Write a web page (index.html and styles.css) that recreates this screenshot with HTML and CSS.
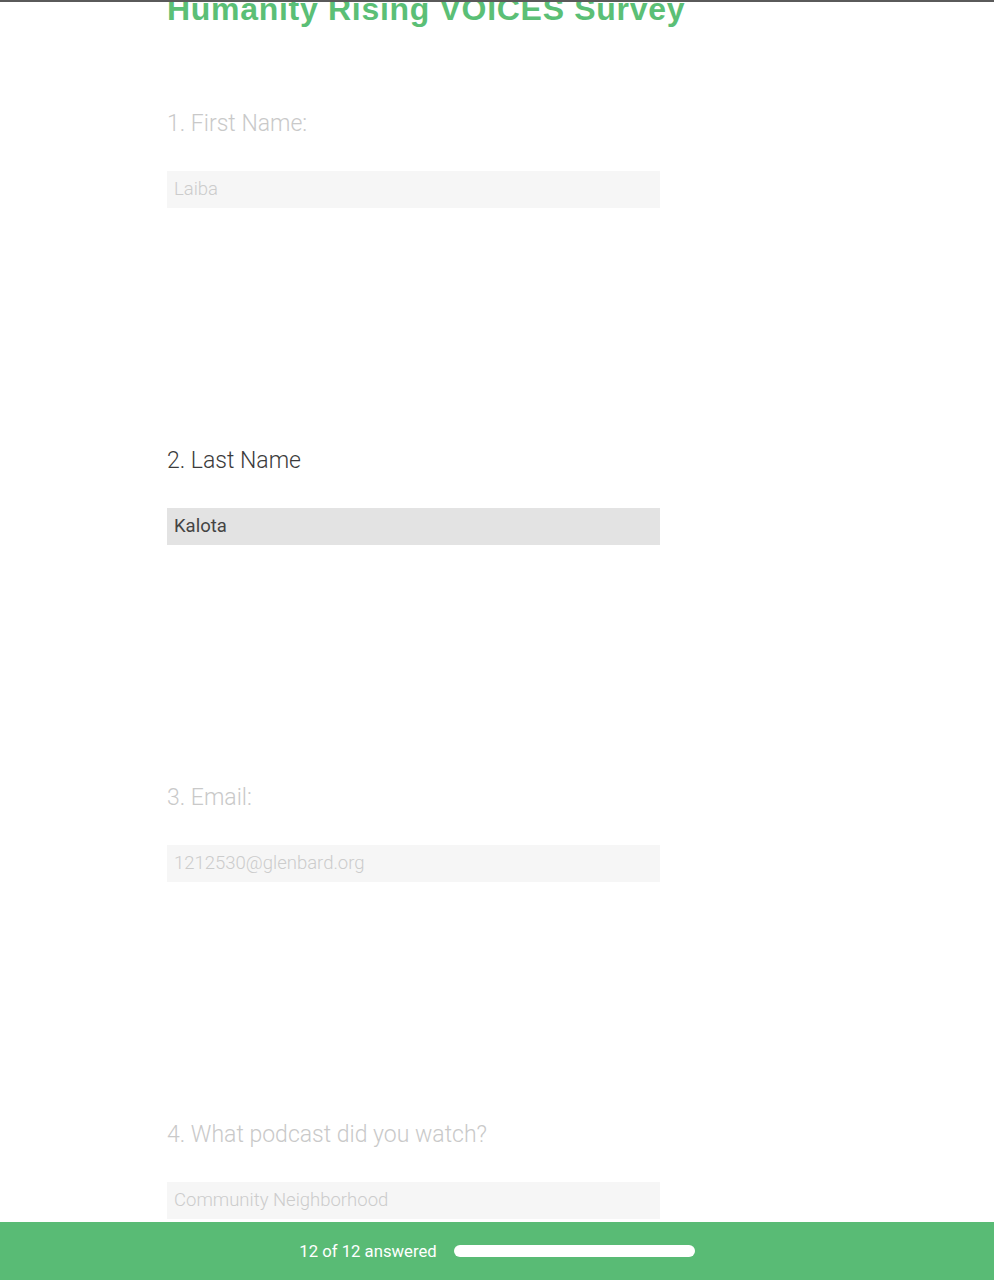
FILE: index.html
```html
<!DOCTYPE html>
<html lang="en">
<head>
<meta charset="utf-8">
<title>Humanity Rising VOICES Survey</title>
<link rel="stylesheet" href="styles.css">
</head>
<body>
<div class="topline"></div>
<main class="survey">
  <h1 class="title">Humanity Rising VOICES Survey</h1>
  <section class="question faded">
    <h2 class="label">1. First Name:</h2>
    <div class="field">Laiba</div>
  </section>
  <section class="question active">
    <h2 class="label">2. Last Name</h2>
    <div class="field">Kalota</div>
  </section>
  <section class="question faded">
    <h2 class="label">3. Email:</h2>
    <div class="field">1212530@glenbard.org</div>
  </section>
  <section class="question faded">
    <h2 class="label">4. What podcast did you watch?</h2>
    <div class="field">Community Neighborhood</div>
  </section>
</main>
<footer class="progress">
  <span class="progress-text">12 of 12 answered</span>
  <span class="progress-bar"></span>
</footer>
</body>
</html>
```
FILE: styles.css
```css
html, body {
  margin: 0;
  padding: 0;
  background: #fff;
  overflow: hidden;
}
body {
  font-family: Roboto, "Liberation Sans", sans-serif;
  height: 1280px;
}
.topline {
  position: fixed;
  top: 0;
  left: 0;
  right: 0;
  height: 2px;
  background: #5a5a5a;
  z-index: 5;
}
.survey {
  padding-left: 167px;
  width: 493px;
}
.title {
  margin: -9px 0 0 0;
  font-family: "Liberation Sans", Arial, sans-serif;
  font-weight: 700;
  font-size: 32px;
  letter-spacing: 0.7px;
  line-height: 36px;
  color: #5bbf76;
  white-space: nowrap;
}
.question {
  margin-top: 82px;
  height: 257px;
}
.question + .question {
  margin-top: 80px;
}
.label {
  margin: 0;
  padding-top: 1px;
  font-weight: 300;
  font-size: 23px;
  line-height: 28px;
}
.field {
  margin-top: 33px;
  height: 37px;
  box-sizing: border-box;
  padding-left: 7px;
  font-size: 18.5px;
  font-weight: 300;
  line-height: 37px;
}
.faded .label { color: #c9c9c9; }
.faded .field { background: #f6f6f6; color: #cccccc; }
.active .label { color: #3b3b3b; }
.active .field { background: #e3e3e3; color: #444; font-weight: 400; }
.progress {
  position: fixed;
  left: 0;
  right: 0;
  bottom: 0;
  height: 58px;
  background: #59bb75;
  display: flex;
  align-items: center;
  justify-content: center;
  gap: 17px;
}
.progress-text {
  color: #fff;
  font-size: 16.7px;
  font-weight: 400;
}
.progress-bar {
  width: 241px;
  height: 12px;
  border-radius: 6px;
  background: #fff;
}
```
